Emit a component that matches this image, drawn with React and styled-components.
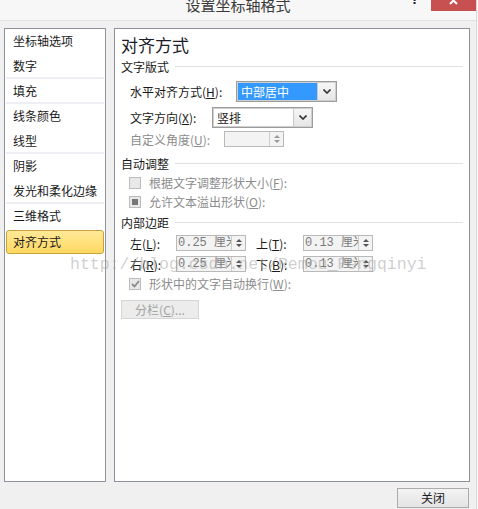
import React from "react";
import styled, { createGlobalStyle } from "styled-components";

const GlobalStyle = createGlobalStyle`
  html, body {
    margin: 0;
    padding: 0;
    background: #f8f8f8;
  }
  body {
    font-family: "Noto Sans CJK SC", "Noto Sans", sans-serif;
    font-size: 12px;
    color: #1a1a1a;
  }
`;

const Window = styled.div`
  position: relative;
  width: 476px;
  height: 509px;
  border-right: 1px solid #d9d9d9;
  background: #f0f0f0;
  display: flex;
  flex-direction: column;
  overflow: hidden;
`;

const TitleBar = styled.div`
  height: 20px;
  background: #f7f7f7;
  border-bottom: 1px solid #e2e2e2;
  display: grid;
  grid-template-columns: 1fr auto 1fr;
  align-items: start;
  overflow: hidden;
`;

const Title = styled.div`
  grid-column: 2;
  font-size: 15px;
  line-height: 15px;
  margin-top: -3px;
  color: #3a3a3a;
`;

const Controls = styled.div`
  grid-column: 3;
  display: flex;
  justify-content: flex-end;
  align-items: flex-start;
`;

const Help = styled.div`
  font-family: "Liberation Sans", sans-serif;
  font-weight: bold;
  font-size: 14px;
  line-height: 14px;
  margin-top: -8px;
  margin-right: 12px;
  color: #222;
`;

const CloseX = styled.div`
  width: 45px;
  height: 11px;
  background: #c75050;
  display: flex;
  justify-content: center;
  align-items: flex-start;
`;

const Body = styled.div`
  display: flex;
  gap: 8px;
  padding: 7px 6px 0 4px;
`;

const List = styled.div`
  box-sizing: border-box;
  width: 102px;
  height: 454px;
  background: #fff;
  border: 1px solid #8e939b;
  display: flex;
  flex-direction: column;
`;

const Item = styled.div`
  box-sizing: border-box;
  height: 25px;
  line-height: 24px;
  padding-left: 7px;
  margin: 0 1px;
  border-bottom: 2px solid ${(p) => (p.$divider ? "#eeeef5" : "transparent")};
  white-space: nowrap;
`;

const SelectedItem = styled.div`
  box-sizing: border-box;
  height: 24px;
  line-height: 22px;
  margin: 1px 1px 0;
  padding-left: 6px;
  border: 1px solid #c9a13c;
  border-radius: 3px;
  background: linear-gradient(#ffe998, #ffd861);
`;

const Panel = styled.div`
  box-sizing: border-box;
  flex: 1;
  height: 454px;
  background: #fff;
  border: 1px solid #8e939b;
  padding: 4px 6px 0 6px;
  display: flex;
  flex-direction: column;
`;

const Heading = styled.div`
  height: 24px;
  line-height: 24px;
  font-size: 17px;
  color: #1c1c2a;
`;

const SectionHeader = styled.div`
  height: 18px;
  margin-top: ${(p) => p.$mt || 0}px;
  display: flex;
  align-items: center;
  gap: 6px;
  white-space: nowrap;

  &::after {
    content: "";
    flex: 1;
    height: 1px;
    background: #e0e0e0;
  }
`;

const Row = styled.div`
  height: ${(p) => p.$h}px;
  margin-top: ${(p) => p.$mt || 0}px;
  padding-left: ${(p) => (p.$check ? 8 : 9)}px;
  display: flex;
  align-items: center;
  white-space: nowrap;
`;

const Label = styled.div`
  width: ${(p) => p.$w}px;
  flex: none;
  color: ${(p) => (p.$disabled ? "#8c8c8c" : "#1a1a1a")};
`;

const Combo = styled.div`
  box-sizing: border-box;
  width: ${(p) => p.$w}px;
  height: 21px;
  border: 1px solid #9c9c9c;
  box-shadow: inset 0 0 0 1px #cfcfcf;
  background: #fff;
  display: flex;
  padding: 1px;
`;

const ComboText = styled.div`
  flex: 1;
  padding-left: 3px;
  line-height: 17px;
  background: ${(p) => (p.$selected ? "#3399ff" : "#fff")};
  color: ${(p) => (p.$selected ? "#fff" : "#1a1a1a")};
`;

const ComboButton = styled.div`
  width: 17px;
  border-left: 1px solid #c8c8c8;
  background: linear-gradient(#f6f6f6, #e6e6e6);
  display: flex;
  align-items: center;
  justify-content: center;
`;

const Spin = styled.div`
  box-sizing: border-box;
  width: ${(p) => p.$w}px;
  height: 16px;
  border: 1px solid #b9b9b9;
  background: #f3f3f3;
  display: flex;
  margin-right: ${(p) => p.$mr || 0}px;
`;

const SpinText = styled.div`
  flex: 1;
  overflow: hidden;
  white-space: nowrap;
  padding-left: 1px;
  line-height: 14px;
  font-family: "Liberation Mono", "Noto Sans CJK SC", monospace;
  font-size: 12px;
  color: #7a7a7a;
`;

const SpinButtons = styled.div`
  width: 13px;
  flex: none;
  border-left: 1px solid #cdcdcd;
  display: flex;
  flex-direction: column;
  align-items: center;
  justify-content: center;
  gap: 2px;
`;

const Check = styled.div`
  box-sizing: border-box;
  width: 12px;
  height: 12px;
  border: 1px solid #bcbcbc;
  background: #e8e8e8;
  margin-right: 8px;
  display: flex;
  align-items: center;
  justify-content: center;
`;

const Dot = styled.div`
  width: 6px;
  height: 6px;
  background: #777;
`;

const DisabledButton = styled.div`
  box-sizing: border-box;
  width: 78px;
  height: 19px;
  margin-top: 7px;
  border: 1px solid #d6d6d6;
  background: #ececec;
  color: #a3a3a3;
  line-height: 17px;
  text-align: center;
`;

const Footer = styled.div`
  display: flex;
  justify-content: flex-end;
  padding: 6px 7px 0 0;
`;

const Button = styled.div`
  box-sizing: border-box;
  width: 72px;
  height: 20px;
  border: 1px solid #acacac;
  background: linear-gradient(#f3f3f3, #e4e4e4);
  line-height: 18px;
  text-align: center;
`;

const Watermark = styled.div`
  position: absolute;
  left: 70px;
  top: 255px;
  font-family: "Liberation Mono", monospace;
  font-size: 16.5px;
  line-height: 20px;
  color: rgba(160, 160, 160, 0.5);
  white-space: nowrap;
  pointer-events: none;
`;

const Chevron = () => (
  <svg width="8" height="5" viewBox="0 0 8 5">
    <path d="M0.5 0.5 L4 4 L7.5 0.5" fill="none" stroke="#333" strokeWidth="1.6" />
  </svg>
);

const Arrows = ({ color = "#666" }) => (
  <>
    <svg width="6" height="3" viewBox="0 0 6 3">
      <path d="M0 3 L3 0 L6 3 Z" fill={color} />
    </svg>
    <svg width="6" height="3" viewBox="0 0 6 3">
      <path d="M0 0 L6 0 L3 3 Z" fill={color} />
    </svg>
  </>
);

const Tick = () => (
  <svg width="9" height="8" viewBox="0 0 9 8">
    <path d="M1 4 L3.5 6.5 L8 1" fill="none" stroke="#8a8a8a" strokeWidth="1.8" />
  </svg>
);

const categories = [
  { name: "坐标轴选项" },
  { name: "数字", divider: true },
  { name: "填充", divider: true },
  { name: "线条颜色" },
  { name: "线型", divider: true },
  { name: "阴影" },
  { name: "发光和柔化边缘", divider: true },
  { name: "三维格式" },
];

const Key = ({ k }) => (
  <>
    (<u>{k}</u>):
  </>
);

const MarginBox = ({ value, mr }) => (
  <Spin $w={70} $mr={mr}>
    <SpinText>{value} 厘米</SpinText>
    <SpinButtons>
      <Arrows color="#555" />
    </SpinButtons>
  </Spin>
);

export default function App() {
  return (
    <Window>
      <GlobalStyle />
      <TitleBar>
        <Title>设置坐标轴格式</Title>
        <Controls>
          <Help>?</Help>
          <CloseX>
            <svg width="10" height="6" viewBox="0 0 10 6">
              <path d="M1 -3 L8 4 M8 -3 L1 4" stroke="#fff" strokeWidth="2" />
            </svg>
          </CloseX>
        </Controls>
      </TitleBar>

      <Body>
        <List>
          {categories.map((c) => (
            <Item key={c.name} $divider={c.divider}>
              {c.name}
            </Item>
          ))}
          <SelectedItem>对齐方式</SelectedItem>
        </List>

        <Panel>
          <Heading>对齐方式</Heading>
          <SectionHeader>文字版式</SectionHeader>
          <Row $h={21} $mt={6}>
            <Label $w={106}>
              水平对齐方式<Key k="H" />
            </Label>
            <Combo $w={101}>
              <ComboText $selected>中部居中</ComboText>
              <ComboButton>
                <Chevron />
              </ComboButton>
            </Combo>
          </Row>
          <Row $h={21} $mt={5}>
            <Label $w={82}>
              文字方向<Key k="X" />
            </Label>
            <Combo $w={101}>
              <ComboText>竖排</ComboText>
              <ComboButton>
                <Chevron />
              </ComboButton>
            </Combo>
          </Row>
          <Row $h={16} $mt={3}>
            <Label $w={94} $disabled>
              自定义角度<Key k="U" />
            </Label>
            <Spin $w={60}>
              <SpinText />
              <SpinButtons>
                <Arrows color="#9a9a9a" />
              </SpinButtons>
            </Spin>
          </Row>

          <SectionHeader $mt={7}>自动调整</SectionHeader>
          <Row $h={19} $mt={1} $check>
            <Check />
            <Label $disabled>
              根据文字调整形状大小<Key k="F" />
            </Label>
          </Row>
          <Row $h={19} $check>
            <Check>
              <Dot />
            </Check>
            <Label $disabled>
              允许文本溢出形状<Key k="O" />
            </Label>
          </Row>

          <SectionHeader $mt={2}>内部边距</SectionHeader>
          <Row $h={16} $mt={4}>
            <Label $w={46}>
              左<Key k="L" />
            </Label>
            <MarginBox value="0.25" mr={10} />
            <Label $w={47}>
              上<Key k="T" />
            </Label>
            <MarginBox value="0.13" />
          </Row>
          <Row $h={16} $mt={5}>
            <Label $w={46}>
              右<Key k="R" />
            </Label>
            <MarginBox value="0.25" mr={10} />
            <Label $w={47}>
              下<Key k="B" />
            </Label>
            <MarginBox value="0.13" />
          </Row>
          <Row $h={19} $mt={2} $check>
            <Check>
              <Tick />
            </Check>
            <Label $disabled>
              形状中的文字自动换行<Key k="W" />
            </Label>
          </Row>
          <DisabledButton>
            分栏(<u>C</u>)...
          </DisabledButton>
        </Panel>
      </Body>

      <Footer>
        <Button>关闭</Button>
      </Footer>

      <Watermark>http://blog.csdn.net/Remou_Fengqinyi</Watermark>
    </Window>
  );
}
